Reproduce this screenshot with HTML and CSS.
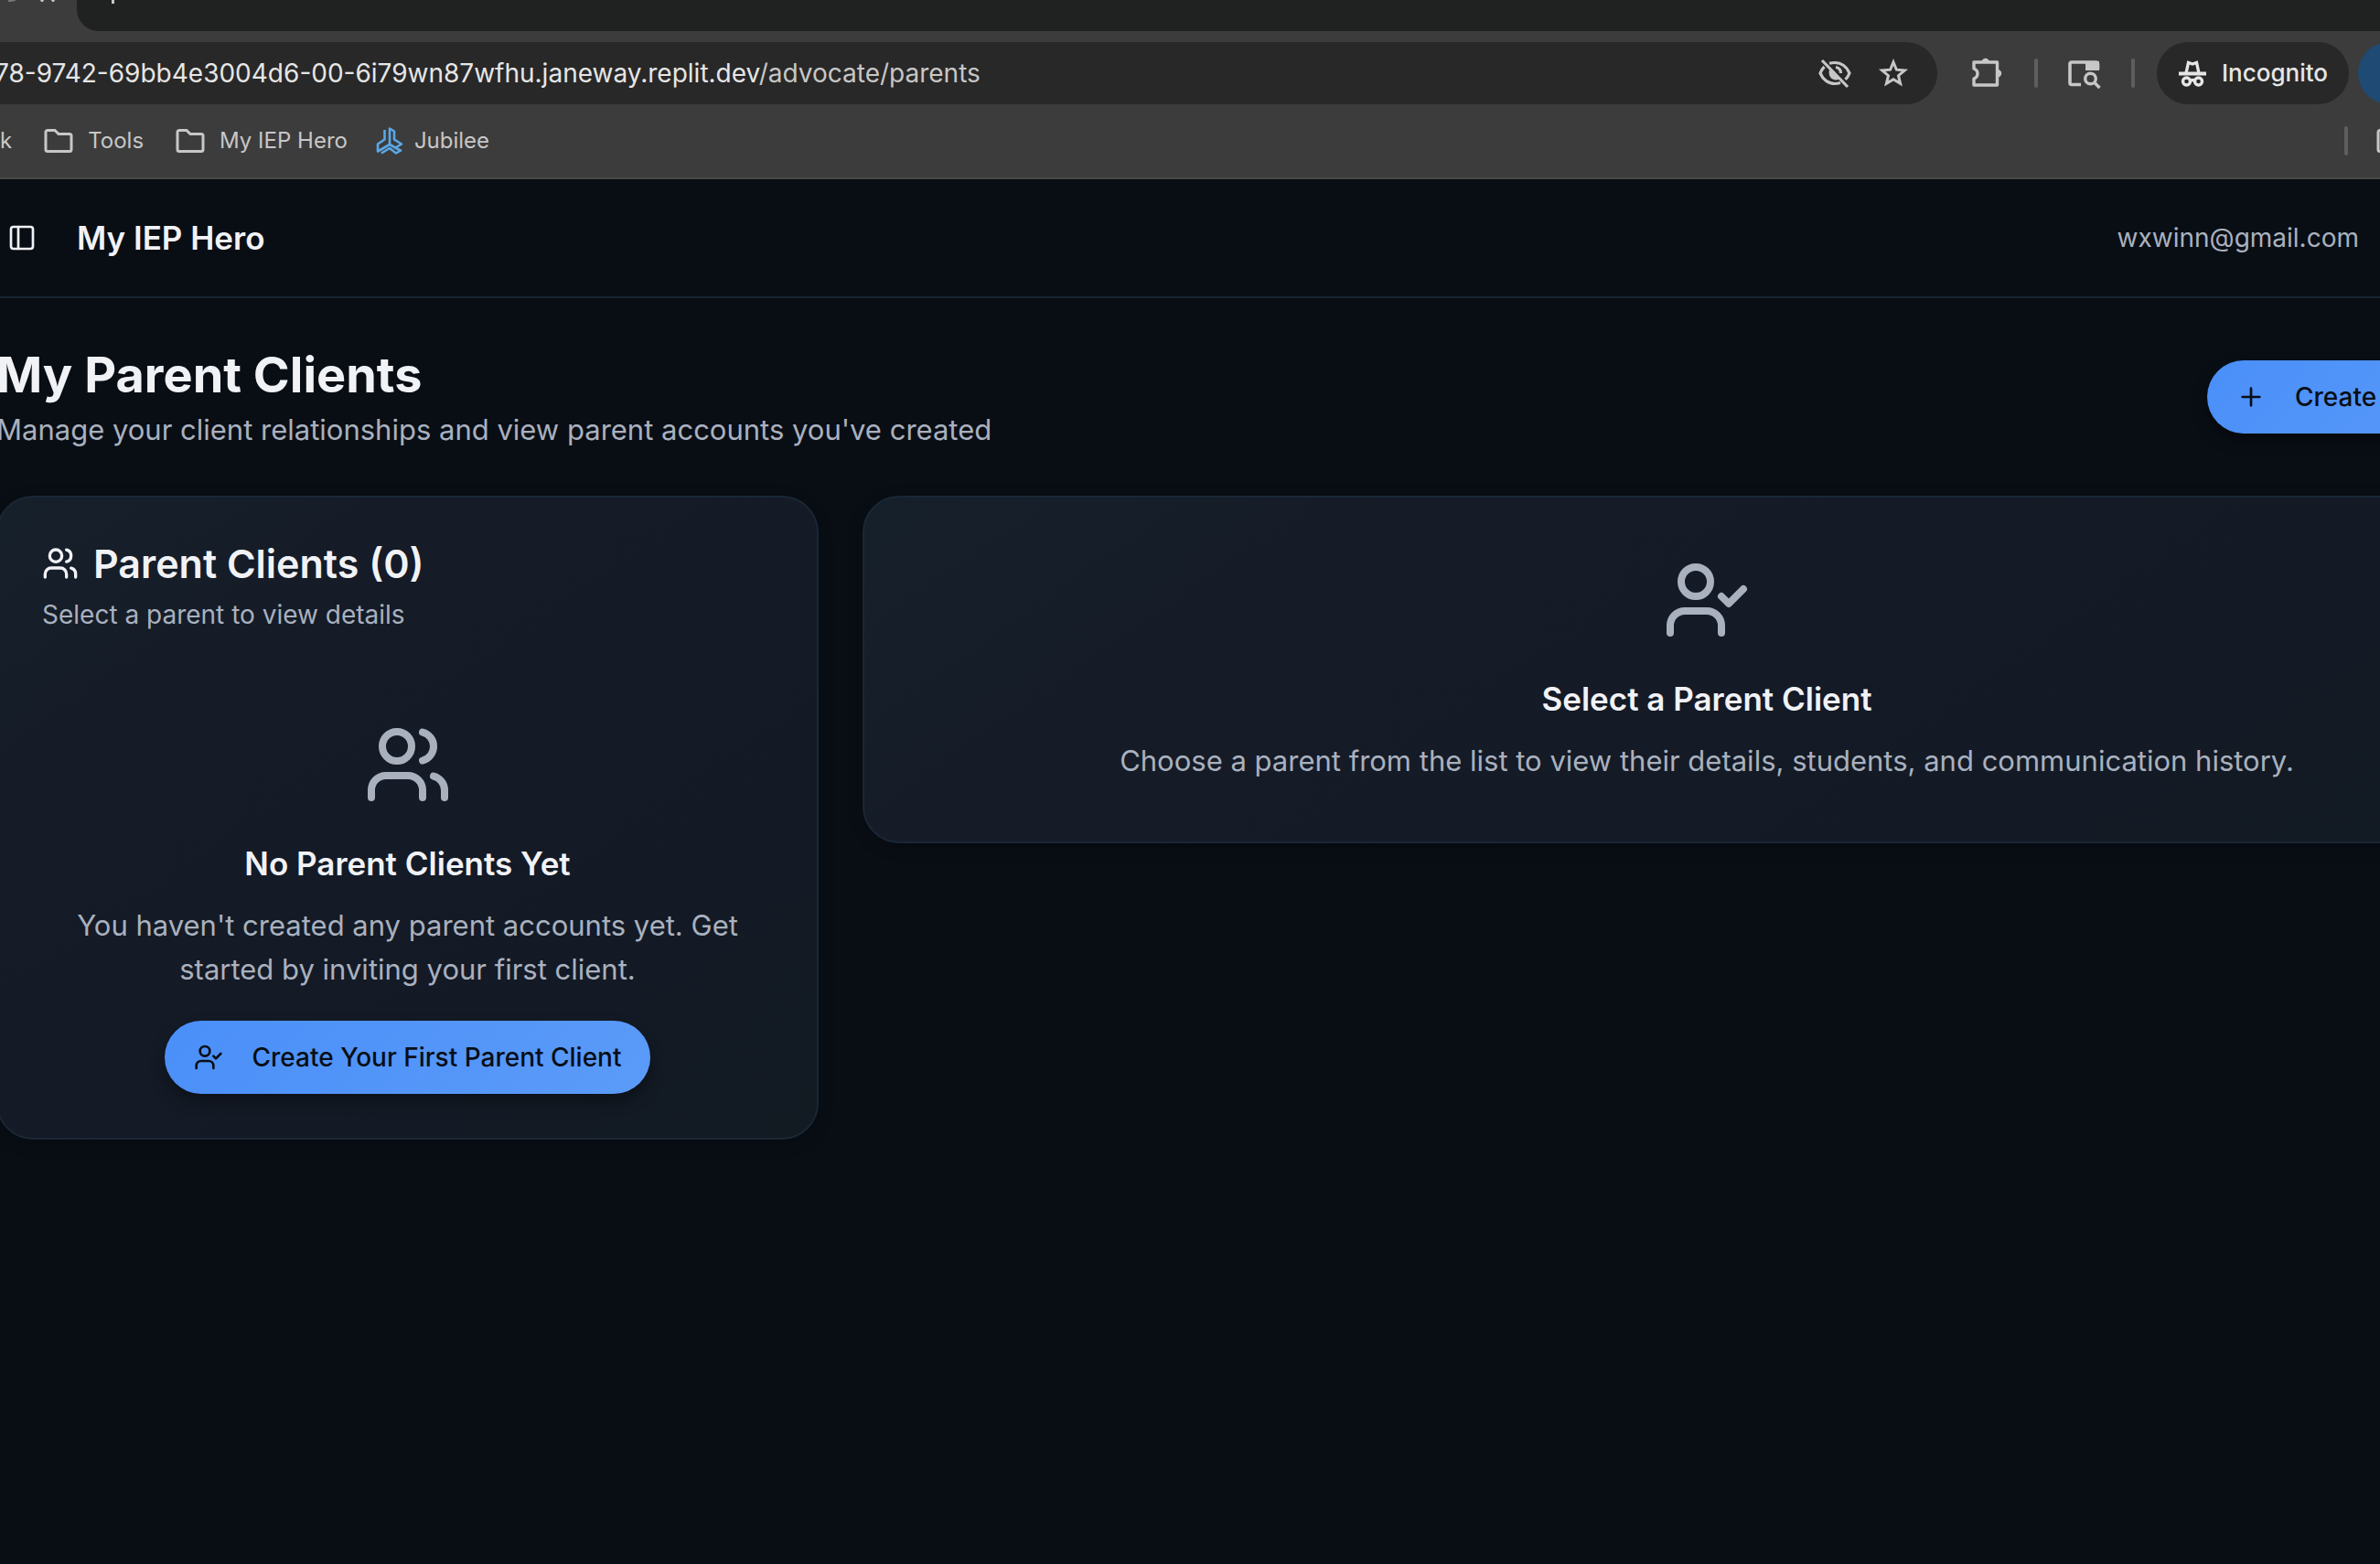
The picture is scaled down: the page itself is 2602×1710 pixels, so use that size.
FILE: index.html
```html
<!DOCTYPE html>
<html lang="en">
<head>
<meta charset="utf-8">
<title>My IEP Hero</title>
<link rel="stylesheet" href="styles.css">
</head>
<body>
<svg class="sprite" aria-hidden="true">
  <symbol id="users" viewBox="0 0 24 24"><path d="M16 21v-2a4 4 0 0 0-4-4H6a4 4 0 0 0-4 4v2"/><circle cx="9" cy="7" r="4"/><path d="M22 21v-2a4 4 0 0 0-3-3.87"/><path d="M16 3.13a4 4 0 0 1 0 7.75"/></symbol>
  <symbol id="user-check" viewBox="0 0 24 24"><path d="M16 21v-2a4 4 0 0 0-4-4H6a4 4 0 0 0-4 4v2"/><circle cx="9" cy="7" r="4"/><path d="m16 11 2 2 4-4"/></symbol>
  <symbol id="plus" viewBox="0 0 24 24"><path d="M5 12h14M12 5v14"/></symbol>
  <symbol id="panel" viewBox="0 0 24 24"><rect x="3" y="3" width="18" height="18" rx="2"/><path d="M9 3v18"/></symbol>
  <symbol id="folder" viewBox="0 0 32 28"><path d="M4.500 2.500h7.500l4 4H28a2 2 0 0 1 2 2V23.500a2 2 0 0 1-2 2H4a2 2 0 0 1-2-2V4.500a2 2 0 0 1 2.500-2z"/></symbol>
</svg>

<header class="browser">
  <div class="tabs">
    <div class="tab-edge"><svg viewBox="0 0 84 34"><path fill="#777" d="M9 0h9q-3 2.500-9 2z"/><path fill="#c7c7c7" d="M44 0h4l-1 2h-2zM56 0h4l-1 2h-2z"/></svg></div>
    <div class="tab-strip"><i class="descender"></i></div>
  </div>
  <div class="toolbar">
    <div class="omnibox">
      <span class="url">78-9742-69bb4e3004d6-00-6i79wn87wfhu.janeway.replit.dev<span class="path">/advocate/parents</span></span>
      <button class="tool" aria-label="Third-party cookies blocked"><svg viewBox="0 0 40 40"><g fill="none" stroke="currentColor" stroke-width="3.200"><path d="M14 9.300Q17 8.500 20 8.500C27 8.500 33 13 36 20Q34.500 24 31.500 26.800M26 30.500Q23 31.500 20 31.500C13 31.500 7 27 4 20Q5.500 16 8.500 13M21 13.500Q26.500 14.500 26.500 20"/><path d="M6 6 34 35"/></g><path fill="currentColor" d="M14 16 24.500 26.500Q20.500 28.500 16.500 26 12.500 22 14 16z"/></svg></button>
      <button class="tool" aria-label="Bookmark this tab"><svg viewBox="0 0 40 40"><path fill="none" stroke="currentColor" stroke-width="3" d="m20 8 3.400 8.200 8.900.7-6.800 5.800 2.100 8.700-7.600-4.700-7.600 4.700 2.100-8.700-6.800-5.800 8.900-.7z"/></svg></button>
    </div>
    <button class="tool ext" aria-label="Extensions"><svg viewBox="0 0 40 40"><path fill="none" stroke="currentColor" stroke-width="3.400" stroke-linejoin="round" d="M6 8h25.500v25H6v-7q4-1.500 4-5.500t-4-5.500z"/><path fill="currentColor" d="M14.500 8a4.200 4.200 0 0 1 8.400 0zM32 16a4.200 4.200 0 0 1 0 8.400z"/></svg></button>
    <span class="rule"></span>
    <button class="tool" aria-label="Search tabs"><svg viewBox="0 0 40 40"><path fill="none" stroke="currentColor" stroke-width="3.600" d="M16 32.500H6a2 2 0 0 1-2-2V10a2 2 0 0 1 2-2H32.500a2 2 0 0 1 2 2v6"/><path fill="currentColor" d="M21 7h15v10H21z"/><g fill="none" stroke="currentColor" stroke-width="3.400"><circle cx="26.500" cy="26" r="5.800"/><path d="m30.500 30 6 6"/></g></svg></button>
    <span class="rule"></span>
    <button class="incognito"><svg viewBox="0 0 32 32"><path fill="none" stroke="currentColor" stroke-width="3.400" d="M9 16 11.500 4.500 16 6l4.500-1.500L23 16"/><path fill="currentColor" d="M1 14.500h30v4H1z"/><g fill="none" stroke="currentColor" stroke-width="3.400"><circle cx="9.500" cy="25" r="4"/><circle cx="22.500" cy="25" r="4"/><path d="M13 24.500q3-2 6 0"/></g></svg>Incognito</button>
    <span class="avatar"></span>
  </div>
  <nav class="bookmarks">
    <a href="#">k</a>
    <a href="#"><svg class="folder"><use href="#folder"/></svg>Tools</a>
    <a href="#"><svg class="folder"><use href="#folder"/></svg>My IEP Hero</a>
    <a href="#" class="jubilee"><svg viewBox="0 0 30 30"><g fill="none" stroke="#5ba8e6" stroke-width="2.600" stroke-linejoin="round"><path d="M9.500 3v10.500L2 18.500V26.500L15 19l12.500 7"/><path d="M15 19V1.500l5 3V13.500l8 5-6 3.500"/><path d="m6 28.500 9-5.500 7 5.500 6-3.500"/></g></svg>Jubilee</a>
    <span class="rule"></span>
    <a href="#" class="all" aria-label="All bookmarks"><svg class="folder"><use href="#folder"/></svg></a>
  </nav>
</header>

<div class="app">
  <header class="topbar">
    <button class="toggle" aria-label="Toggle sidebar"><svg class="line"><use href="#panel"/></svg></button>
    <span class="brand">My IEP Hero</span>
    <span class="email">wxwinn@gmail.com</span>
  </header>
  <main class="content">
    <div class="heading">
      <div>
        <h1>My Parent Clients</h1>
        <p>Manage your client relationships and view parent accounts you've created</p>
      </div>
      <button class="primary create"><svg class="line"><use href="#plus"/></svg>Create</button>
    </div>
    <div class="grid">
      <section class="card list">
        <h2><svg class="line"><use href="#users"/></svg>Parent Clients (0)</h2>
        <p class="hint">Select a parent to view details</p>
        <div class="empty">
          <svg class="line"><use href="#users"/></svg>
          <h3>No Parent Clients Yet</h3>
          <p>You haven't created any parent accounts yet. Get started by inviting your first client.</p>
          <button class="primary"><svg class="line"><use href="#user-check"/></svg>Create Your First Parent Client</button>
        </div>
      </section>
      <section class="card detail">
        <div class="empty">
          <svg class="line"><use href="#user-check"/></svg>
          <h3>Select a Parent Client</h3>
          <p>Choose a parent from the list to view their details, students, and communication history.</p>
        </div>
      </section>
    </div>
  </main>
</div>
</body>
</html>
```
FILE: styles.css
```css
* { box-sizing: border-box; }
body {
  margin: 0;
  min-height: 100vh;
  background: #090e15;
  color: #f1f2f6;
  font: 31px/48px Inter, "Liberation Sans", sans-serif;
}
h1, h2, h3, p { margin: 0; }
button { border: 0; padding: 0; background: none; color: inherit; font: inherit; }
a { color: inherit; text-decoration: none; }
svg { display: block; flex: none; }
.sprite { position: absolute; width: 0; height: 0; }
.line { fill: none; stroke: currentColor; stroke-width: 2; stroke-linecap: round; stroke-linejoin: round; }

/* Browser frame */
.browser { background: #3c3c3c; border-bottom: 2px solid #464846; overflow: hidden; }
.tabs { display: flex; height: 34px; }
.tab-edge { width: 84px; }
.tab-strip { flex: 1; background: #202221; border-bottom-left-radius: 24px; }
.descender { display: block; width: 3px; height: 4px; margin-left: 38px; background: #c7c7c7; }
.toolbar { display: flex; align-items: center; height: 92px; color: #c7c7c7; white-space: nowrap; }
.omnibox { display: flex; align-items: center; gap: 24px; flex: 1; height: 68px; padding-right: 28px; border-radius: 0 34px 34px 0; background: #282828; }
.url { flex: 1; margin-left: -6px; color: #e6e6e6; font-size: 28px; }
.path { color: #c7c7c7; }
.tool { width: 40px; height: 40px; }
.tool svg { width: 40px; height: 40px; }
.ext { margin: 0 32px 0 34px; }
.rule { width: 4px; height: 32px; border-radius: 2px; background: #5e5e5e; }
.rule + .tool { margin: 0 31px; }
.incognito { display: flex; align-items: center; gap: 16px; height: 68px; margin: 0 10px 0 24px; padding: 0 23px; border-radius: 34px; background: #282828; color: #e6e6e6; font-size: 26px; font-weight: 500; }
.incognito svg { width: 32px; height: 32px; }
.avatar { flex: none; width: 68px; height: 68px; margin-right: -44px; border-radius: 50%; background: #1f4a74; }
.bookmarks { display: flex; align-items: center; gap: 35px; height: 68px; padding-bottom: 12px; color: #c7c7c7; font-size: 24px; white-space: nowrap; }
.bookmarks a { display: flex; align-items: center; gap: 16px; }
.bookmarks svg { width: 32px; height: 28px; }
.folder { fill: none; stroke: currentColor; stroke-width: 3; }
.bookmarks .jubilee { gap: 12px; margin-left: -4px; }
.bookmarks .jubilee svg { width: 30px; height: 30px; }
.bookmarks .rule { margin-left: auto; }
.bookmarks .all { margin: 0 -28px 0 -4px; }

/* Application */
.app { overflow: hidden; }
.topbar { display: flex; align-items: center; height: 130px; padding: 0 23px 0 8px; border-bottom: 2px solid #182431; }
.toggle svg { width: 32px; height: 32px; }
.brand { flex: 1; margin-left: 44px; font-size: 35px; font-weight: 600; }
.email { color: #a9b1bf; font-size: 28px; }
.content { margin: 0 -187px 0 -4px; padding: 48px 0; }
.heading { display: flex; align-items: center; justify-content: space-between; height: 120px; margin-bottom: 48px; color: #a9b1bf; }
h1 { color: #f1f2f6; font-size: 54px; font-weight: 700; line-height: 72px; }
.primary { display: inline-flex; align-items: center; gap: 32px; height: 80px; padding: 0 32px; border-radius: 40px; background: linear-gradient(135deg, #4a8ff9, #5b9bf8); box-shadow: 0 8px 16px rgba(0, 0, 0, .35); color: #090e15; font-size: 28px; font-weight: 500; }
.primary svg { width: 32px; height: 32px; }
.create { min-width: 376px; }
.grid { display: grid; grid-template-columns: repeat(3, 1fr); gap: 48px; align-items: start; }
.card { border: 2px solid #1a2735; border-radius: 40px; background: linear-gradient(145deg, #16202b, #151b27 30%, #131a25 75%, #121a22); box-shadow: 0 4px 16px rgba(0, 0, 0, .25); }
.list { padding: 48px; }
.detail { grid-column: span 2; padding: 64px 48px; }
h2 { display: flex; align-items: center; gap: 16px; font-size: 43px; font-weight: 600; line-height: 48px; }
h2 svg { width: 40px; height: 40px; }
.hint { margin-top: 12px; color: #a9b1bf; font-size: 28px; line-height: 40px; }
.empty { display: flex; flex-direction: column; align-items: center; color: #a9b1bf; text-align: center; }
.list .empty { padding-top: 96px; }
.empty > svg { width: 96px; height: 96px; margin-bottom: 32px; }
h3 { margin-bottom: 16px; color: #f1f2f6; font-size: 35px; font-weight: 600; line-height: 56px; }
.empty .primary { margin-top: 32px; }
```
